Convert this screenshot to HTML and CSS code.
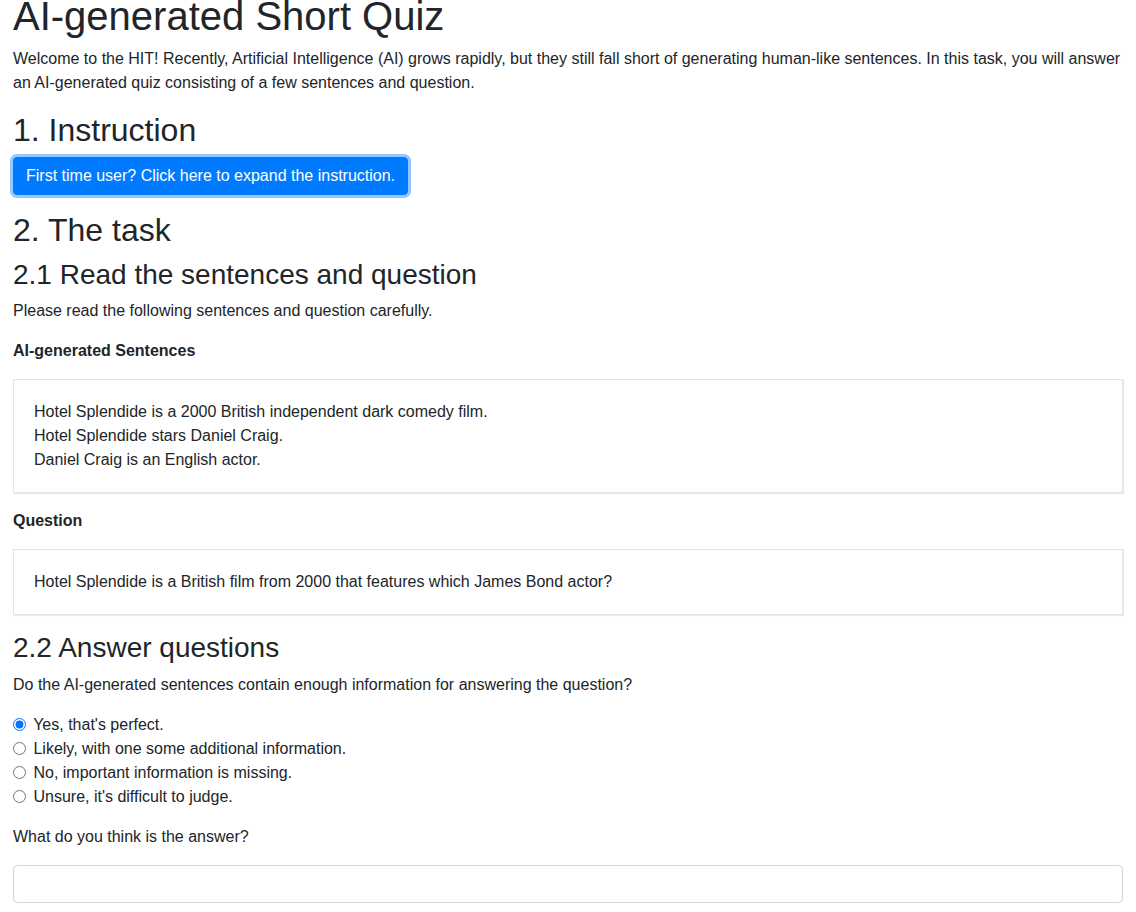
FILE: index.html
```html
<!DOCTYPE html>
<html>
<head>
    <title>AI-generated Short Quiz</title>
    <link rel="stylesheet" href="styles.css">
</head>
<body>
    <div class="page">
        <h1 class="title">AI-generated Short Quiz</h1>
        <p>Welcome to the HIT! Recently, Artificial Intelligence (AI) grows rapidly, but they still fall short of generating human-like sentences. In this task, you will answer an AI-generated quiz consisting of a few sentences and question.</p>

        <h2>1. Instruction</h2>
        <div class="block">
            <button class="btn-primary" type="button">First time user? Click here to expand the instruction.</button>
        </div>

        <h2>2. The task</h2>
        <h3>2.1 Read the sentences and question</h3>
        <p>Please read the following sentences and question carefully.</p>

        <p class="label">AI-generated Sentences</p>
        <div class="box">
            Hotel Splendide is a 2000 British independent dark comedy film.<br>
            Hotel Splendide stars Daniel Craig.<br>
            Daniel Craig is an English actor.
        </div>

        <p class="label">Question</p>
        <div class="box">
            Hotel Splendide is a British film from 2000 that features which James Bond actor?
        </div>

        <h3>2.2 Answer questions</h3>
        <p>Do the AI-generated sentences contain enough information for answering the question?</p>

        <div class="block">
            <label class="choice"><input type="radio" name="enough" checked> Yes, that's perfect.</label>
            <label class="choice"><input type="radio" name="enough"> Likely, with one some additional information.</label>
            <label class="choice"><input type="radio" name="enough"> No, important information is missing.</label>
            <label class="choice"><input type="radio" name="enough"> Unsure, it's difficult to judge.</label>
        </div>

        <p>What do you think is the answer?</p>
        <input class="form-control" type="text">
    </div>
</body>
</html>
```

FILE: styles.css
```css
/* Base */
body {
    margin: 0;
    font-family: "Liberation Sans", Arial, sans-serif;
    font-size: 16px;
    line-height: 1.5;
    color: #212529;
    background-color: #fff;
}

.page {
    padding: 0 13px;
}

h1, h2, h3 {
    font-weight: 500;
    line-height: 1.2;
    margin: 0 0 8px;
}

h1 {
    font-size: 40px;
}

h2 {
    font-size: 32px;
}

h3 {
    font-size: 28px;
}

.title {
    line-height: 32px;
    margin-bottom: 15px;
}

p {
    margin: 0 0 16px;
}

.block {
    margin-bottom: 16px;
}

/* Button in its focused state */
.btn-primary {
    display: inline-block;
    font-family: inherit;
    font-size: 16px;
    line-height: 1.5;
    padding: 6px 12px;
    color: #fff;
    background-color: #007bff;
    border: 1px solid #007bff;
    border-radius: 4px;
    box-shadow: 0 0 0 3px rgba(38, 143, 255, 0.5);
    cursor: pointer;
}

.label {
    font-weight: bold;
}

/* Sentences and question boxes */
.box {
    border: 1px solid #e4e4e4;
    box-shadow: 1px 1px 1px rgba(0, 0, 0, 0.08);
    padding: 20px;
    margin-bottom: 16px;
    background-color: #fff;
}

/* Radio choices */
.choice {
    display: block;
}

.choice input {
    margin: 0 3px 0 0;
    width: 13px;
    height: 13px;
    vertical-align: -1px;
}

.form-control {
    display: block;
    box-sizing: border-box;
    width: 100%;
    height: 38px;
    padding: 6px 12px;
    font-family: inherit;
    font-size: 16px;
    color: #495057;
    border: 1px solid #ced4da;
    border-radius: 4px;
    margin-bottom: 16px;
}
```
